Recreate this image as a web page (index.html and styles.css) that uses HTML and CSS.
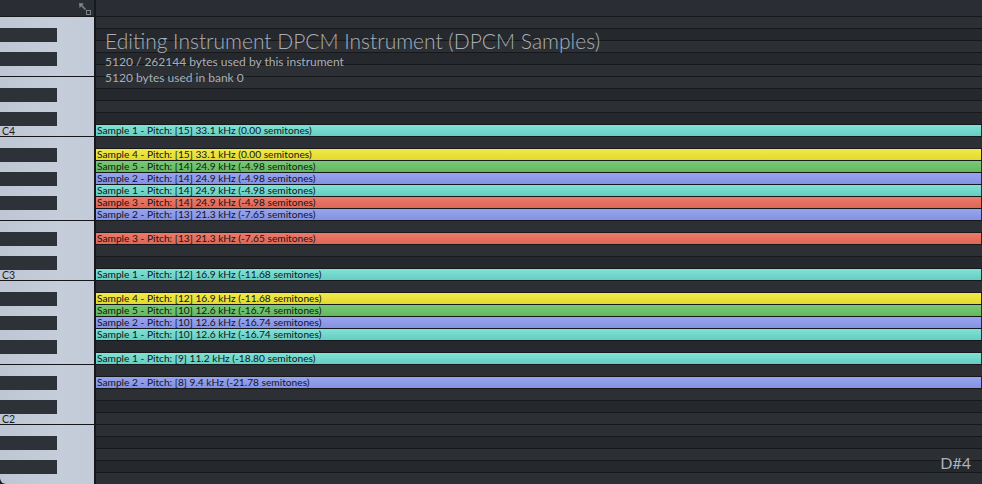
FILE: index.html
```html
<!DOCTYPE html>
<html>
<head>
<meta charset="utf-8">
<link rel="stylesheet" href="styles.css">
</head>
<body>
<div class="app">
  <div class="top">
    <div class="corner">
      <svg class="resize" width="14" height="14" viewBox="0 0 14 14">
        <path d="M2.5 2.5 L7.5 7.5" stroke="#7c828c" stroke-width="1.6" fill="none"/>
        <path d="M1 1 L6 1.5 L1.5 6 Z" fill="#7c828c"/>
        <rect x="8.5" y="8.5" width="4" height="4" stroke="#7c828c" stroke-width="1" fill="none"/>
      </svg>
    </div>
    <div class="topbar"></div>
  </div>
  <div class="main">
    <div class="piano">
      <div class="key"></div>
      <div class="key"><span class="bk"></span></div>
      <div class="key"></div>
      <div class="key"><span class="bk"></span></div>
      <div class="key sep"></div>
      <div class="key"></div>
      <div class="key"><span class="bk"></span></div>
      <div class="key"></div>
      <div class="key"><span class="bk"></span></div>
      <div class="key sep"><span class="lbl">C4</span></div>
      <div class="key"></div>
      <div class="key"><span class="bk"></span></div>
      <div class="key"></div>
      <div class="key"><span class="bk"></span></div>
      <div class="key"></div>
      <div class="key"><span class="bk"></span></div>
      <div class="key sep"></div>
      <div class="key"></div>
      <div class="key"><span class="bk"></span></div>
      <div class="key"></div>
      <div class="key"><span class="bk"></span></div>
      <div class="key sep"><span class="lbl">C3</span></div>
      <div class="key"></div>
      <div class="key"><span class="bk"></span></div>
      <div class="key"></div>
      <div class="key"><span class="bk"></span></div>
      <div class="key"></div>
      <div class="key"><span class="bk"></span></div>
      <div class="key sep"></div>
      <div class="key"></div>
      <div class="key"><span class="bk"></span></div>
      <div class="key"></div>
      <div class="key"><span class="bk"></span></div>
      <div class="key sep"><span class="lbl">C2</span></div>
      <div class="key"></div>
      <div class="key"><span class="bk"></span></div>
      <div class="key"></div>
      <div class="key"><span class="bk"></span></div>
      <div class="key"></div>
    </div>
    <div class="grid">
      <div class="row w"></div>
      <div class="row b"></div>
      <div class="row w"></div>
      <div class="row b"></div>
      <div class="row w"></div>
      <div class="row w"></div>
      <div class="row b"></div>
      <div class="row w"></div>
      <div class="row b"></div>
      <div class="row w"><div class="bar teal">Sample 1 - Pitch: [15] 33.1 kHz (0.00 semitones)</div></div>
      <div class="row w"></div>
      <div class="row b"><div class="bar yellow">Sample 4 - Pitch: [15] 33.1 kHz (0.00 semitones)</div></div>
      <div class="row w"><div class="bar green">Sample 5 - Pitch: [14] 24.9 kHz (-4.98 semitones)</div></div>
      <div class="row b"><div class="bar blue">Sample 2 - Pitch: [14] 24.9 kHz (-4.98 semitones)</div></div>
      <div class="row w"><div class="bar teal">Sample 1 - Pitch: [14] 24.9 kHz (-4.98 semitones)</div></div>
      <div class="row b"><div class="bar red">Sample 3 - Pitch: [14] 24.9 kHz (-4.98 semitones)</div></div>
      <div class="row w"><div class="bar blue">Sample 2 - Pitch: [13] 21.3 kHz (-7.65 semitones)</div></div>
      <div class="row w"></div>
      <div class="row b"><div class="bar red">Sample 3 - Pitch: [13] 21.3 kHz (-7.65 semitones)</div></div>
      <div class="row w"></div>
      <div class="row b"></div>
      <div class="row w"><div class="bar teal">Sample 1 - Pitch: [12] 16.9 kHz (-11.68 semitones)</div></div>
      <div class="row w"></div>
      <div class="row b"><div class="bar yellow">Sample 4 - Pitch: [12] 16.9 kHz (-11.68 semitones)</div></div>
      <div class="row w"><div class="bar green">Sample 5 - Pitch: [10] 12.6 kHz (-16.74 semitones)</div></div>
      <div class="row b"><div class="bar blue">Sample 2 - Pitch: [10] 12.6 kHz (-16.74 semitones)</div></div>
      <div class="row w"><div class="bar teal">Sample 1 - Pitch: [10] 12.6 kHz (-16.74 semitones)</div></div>
      <div class="row b"></div>
      <div class="row w"><div class="bar teal">Sample 1 - Pitch: [9] 11.2 kHz (-18.80 semitones)</div></div>
      <div class="row w"></div>
      <div class="row b"><div class="bar blue">Sample 2 - Pitch: [8] 9.4 kHz (-21.78 semitones)</div></div>
      <div class="row w"></div>
      <div class="row b"></div>
      <div class="row w"></div>
      <div class="row w"></div>
      <div class="row b"></div>
      <div class="row w"></div>
      <div class="row b"></div>
      <div class="row w"></div>

      <div class="info">
        <div class="title">Editing Instrument DPCM Instrument (DPCM Samples)</div>
        <div class="sub">5120 / 262144 bytes used by this instrument</div>
        <div class="sub">5120 bytes used in bank 0</div>
      </div>
      <div class="note">D#4</div>
    </div>
  </div>
</div>
</body>
</html>
```

FILE: styles.css
```css
html, body {
  margin: 0;
  padding: 0;
  background: #1b1d20;
}
.app {
  width: 982px;
  height: 484px;
  overflow: hidden;
  display: flex;
  flex-direction: column;
  font-family: Lato, "Noto Sans", sans-serif;
}
.top {
  height: 17px;
  display: flex;
  flex: none;
}
.corner {
  width: 94px;
  height: 16px;
  background: #2a2e34;
  border-bottom: 1px solid #17191c;
  border-right: 2px solid #17191c;
  display: flex;
  justify-content: flex-end;
  align-items: flex-start;
}
.resize {
  margin: 2px 2px 0 0;
}
.topbar {
  flex: 1;
  height: 16px;
  background: #2a2e34;
  border-bottom: 1px solid #17191c;
}
.main {
  display: flex;
  flex: 1;
  min-height: 0;
}
.piano {
  width: 94px;
  flex: none;
  background: linear-gradient(90deg, #bfc6d3 0%, #c5ccda 60%, #c3cad8 100%);
  border-bottom-left-radius: 6px;
}
.key {
  height: 12px;
  box-sizing: border-box;
  position: relative;
}
.key.sep {
  border-bottom: 1px solid #15171a;
}
.bk {
  position: absolute;
  left: 0;
  top: -1px;
  width: 57px;
  height: 14px;
  background: #2d3138;
}
.lbl {
  position: absolute;
  left: 2px;
  bottom: -1px;
  font-size: 10.5px;
  line-height: 11px;
  color: #1d1f22;
}
.grid {
  flex: 1;
  border-left: 2px solid #15171a;
  position: relative;
}
.row {
  height: 12px;
  box-sizing: border-box;
  border-bottom: 1px solid #16181b;
  display: flex;
}
.row.w {
  background: #2c3035;
}
.row.b {
  background: #25282c;
}
.bar {
  flex: 1;
  height: 11px;
  box-sizing: border-box;
  margin-right: 1px;
  padding-left: 1px;
  font-size: 10.2px;
  line-height: 11px;
  color: #141518;
  white-space: nowrap;
  overflow: hidden;
}
.teal { background: linear-gradient(#80e2d6, #66cdc0); }
.yellow { background: linear-gradient(#f2ea48, #e2da30); }
.green { background: linear-gradient(#78ca74, #62b860); }
.blue { background: linear-gradient(#97a4ee, #8592e2); }
.red { background: linear-gradient(#ec7a6a, #de6656); }
.info {
  position: absolute;
  left: 9px;
  top: 10px;
  color: #a9aeb6;
}
.title {
  font-size: 21px;
  line-height: 27px;
  font-weight: 300;
}
.sub {
  font-size: 12px;
  line-height: 16px;
}
.note {
  position: absolute;
  right: 11px;
  bottom: 12px;
  font-size: 16px;
  line-height: 18px;
  color: #aab2c0;
}
```
